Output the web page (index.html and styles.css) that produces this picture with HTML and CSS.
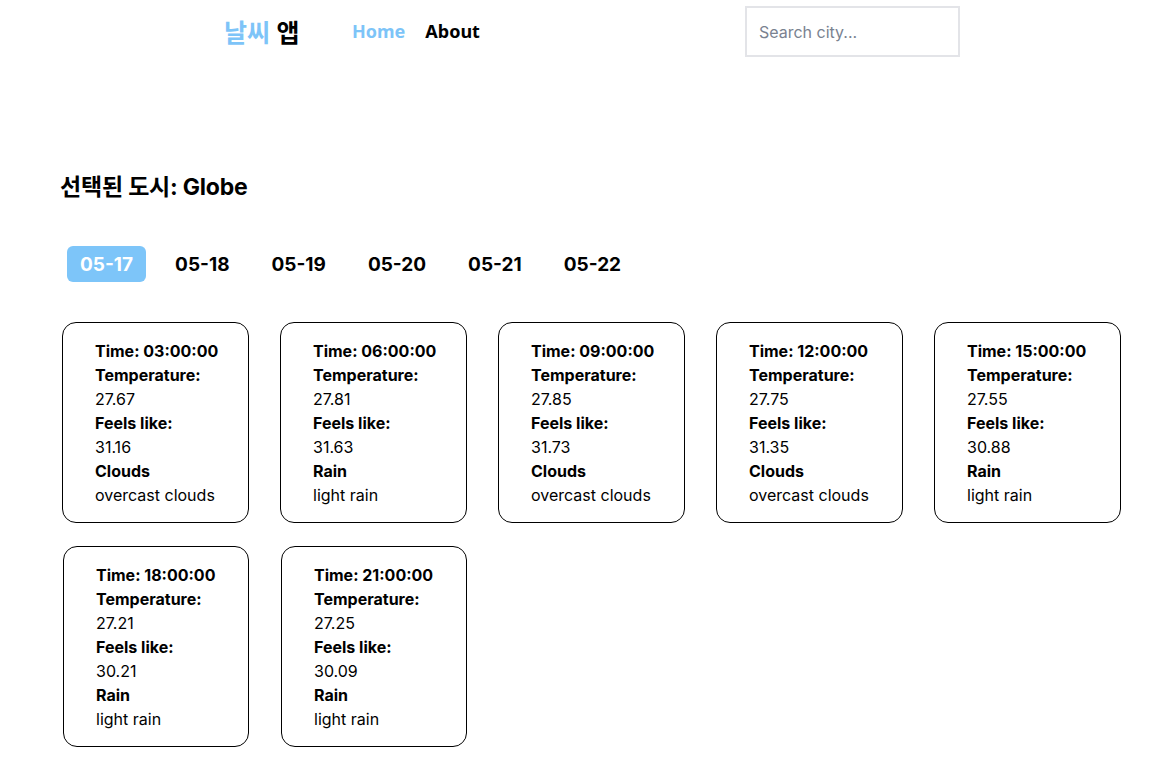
FILE: index.html
```html
<!DOCTYPE html>
<html lang="ko">
<head>
<meta charset="utf-8">
<title>날씨 앱</title>
<link rel="stylesheet" href="styles.css">
</head>
<body>
<header class="header">
  <div class="logo"><span class="logo-accent">날씨</span> 앱</div>
  <nav class="nav">
    <a class="nav-link active" href="#">Home</a>
    <a class="nav-link" href="#">About</a>
  </nav>
  <input class="search" type="text" placeholder="Search city...">
</header>
<main class="main">
  <h2 class="city">선택된 도시: Globe</h2>
  <div class="tabs">
    <button class="tab active">05-17</button>
    <button class="tab">05-18</button>
    <button class="tab">05-19</button>
    <button class="tab">05-20</button>
    <button class="tab">05-21</button>
    <button class="tab">05-22</button>
  </div>
  <div class="cards">
    <div class="card"><b>Time: 03:00:00</b><b>Temperature:</b><span>27.67</span><b>Feels like:</b><span>31.16</span><b>Clouds</b><span>overcast clouds</span></div>
    <div class="card"><b>Time: 06:00:00</b><b>Temperature:</b><span>27.81</span><b>Feels like:</b><span>31.63</span><b>Rain</b><span>light rain</span></div>
    <div class="card"><b>Time: 09:00:00</b><b>Temperature:</b><span>27.85</span><b>Feels like:</b><span>31.73</span><b>Clouds</b><span>overcast clouds</span></div>
    <div class="card"><b>Time: 12:00:00</b><b>Temperature:</b><span>27.75</span><b>Feels like:</b><span>31.35</span><b>Clouds</b><span>overcast clouds</span></div>
    <div class="card"><b>Time: 15:00:00</b><b>Temperature:</b><span>27.55</span><b>Feels like:</b><span>30.88</span><b>Rain</b><span>light rain</span></div>
    <div class="card row2"><b>Time: 18:00:00</b><b>Temperature:</b><span>27.21</span><b>Feels like:</b><span>30.21</span><b>Rain</b><span>light rain</span></div>
    <div class="card row2"><b>Time: 21:00:00</b><b>Temperature:</b><span>27.25</span><b>Feels like:</b><span>30.09</span><b>Rain</b><span>light rain</span></div>
  </div>
</main>
</body>
</html>
```
FILE: styles.css
```css
* { box-sizing: border-box; }
body {
  margin: 0;
  font-family: Inter, "Noto Sans CJK KR", sans-serif;
  color: #000;
  background: #fff;
}
.header {
  display: flex;
  align-items: center;
  height: 64px;
  padding: 6px 0 0 224px;
}
.logo {
  font-family: "Noto Sans", "Noto Sans CJK KR", sans-serif;
  font-weight: 700;
  font-size: 25px;
  letter-spacing: 0;
  width: 128px;
  margin-top: -8px;
}
.logo-accent { color: #7dc4f8; }
.nav {
  display: flex;
  gap: 20px;
  margin-top: -8px;
}
.nav-link {
  font-family: "Noto Sans", sans-serif;
  font-weight: 700;
  font-size: 18px;
  text-decoration: none;
  color: #000;
}
.nav-link.active { color: #7dc4f8; }
.search {
  margin-left: 265px;
  margin-top: -7px;
  width: 215px;
  height: 51px;
  border: 2px solid #e3e4e8;
  padding: 0 12px;
  font-family: Inter, sans-serif;
  font-size: 16px;
  outline: none;
}
.search::placeholder { color: #7a8290; }
.main {
  padding: 108px 37px 0 60px;
}
.city {
  margin: 0;
  font-size: 23px;
  font-weight: 700;
  line-height: 30px;
  letter-spacing: -0.2px;
}
.tabs {
  display: flex;
  gap: 16px;
  margin: 44px 0 0 7px;
}
.tab {
  font-family: Inter, sans-serif;
  font-weight: 700;
  font-size: 19px;
  height: 36px;
  padding: 0 13px;
  border: none;
  border-radius: 6px;
  background: transparent;
  color: #000;
}
.tab.active { background: #7dc5f9; color: #fff; }
.cards {
  display: flex;
  flex-wrap: wrap;
  column-gap: 31px;
  row-gap: 23px;
  margin: 40px 0 0 2px;
}
.card {
  width: 187px;
  height: 201px;
  border: 1px solid #000;
  border-radius: 14px;
  padding: 16px 0 0 32px;
  display: flex;
  flex-direction: column;
  font-size: 16px;
  line-height: 24px;
}
.card.row2 { margin-left: 1px; width: 186px; }
.card b { font-weight: 700; }
.card span { font-weight: 400; }
```
